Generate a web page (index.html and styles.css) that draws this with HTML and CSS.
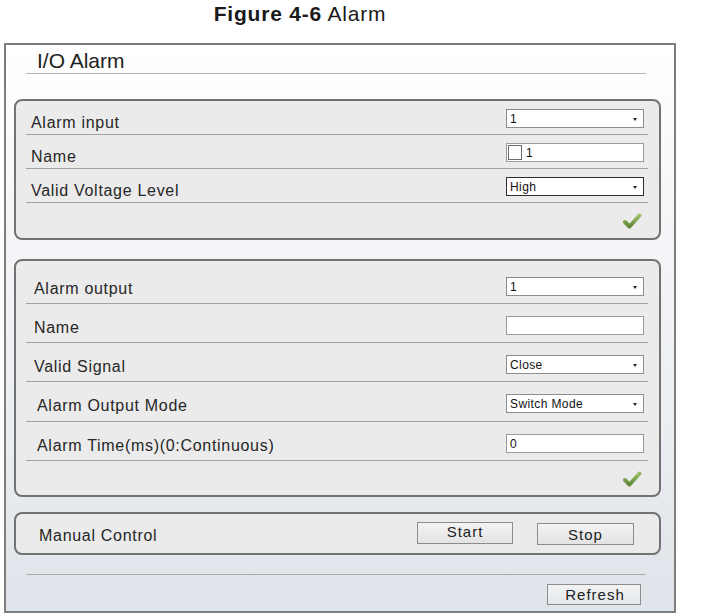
FILE: index.html
```html
<!DOCTYPE html>
<html>
<head>
<meta charset="utf-8">
<link rel="stylesheet" href="styles.css">
</head>
<body>
<div class="fig-title"><b>Figure 4-6</b> Alarm</div>
<div class="window">
  <div class="window-head">I/O Alarm</div>

  <div class="panel panel-in">
    <div class="row">
      <span class="lbl">Alarm input</span>
      <div class="sel"><span>1</span><i class="arrow"></i></div>
    </div>
    <div class="row">
      <span class="lbl">Name</span>
      <div class="inp"><span class="cbox"></span><span>1</span></div>
    </div>
    <div class="row">
      <span class="lbl">Valid Voltage Level</span>
      <div class="sel sel-focus"><span>High</span><i class="arrow"></i></div>
    </div>
    <div class="foot">
      <svg class="check" width="20" height="18" viewBox="0 0 20 18">
        <defs><linearGradient id="g1" x1="0" y1="0" x2="0" y2="1"><stop offset="0" stop-color="#9bbf6a"/><stop offset="1" stop-color="#62893a"/></linearGradient></defs>
        <path d="M3 10 L7.5 14.5 L17.5 3.5" fill="none" stroke="url(#g1)" stroke-width="4" stroke-linecap="round" stroke-linejoin="round"/>
      </svg>
    </div>
  </div>

  <div class="panel panel-out">
    <div class="row row-first row-b">
      <span class="lbl lbl-a">Alarm output</span>
      <div class="sel"><span>1</span><i class="arrow"></i></div>
    </div>
    <div class="row row-b">
      <span class="lbl lbl-a">Name</span>
      <div class="inp"></div>
    </div>
    <div class="row row-b">
      <span class="lbl lbl-a">Valid Signal</span>
      <div class="sel"><span>Close</span><i class="arrow"></i></div>
    </div>
    <div class="row row-b row-wide">
      <span class="lbl lbl-c">Alarm Output Mode</span>
      <div class="sel"><span>Switch Mode</span><i class="arrow"></i></div>
    </div>
    <div class="row row-b">
      <span class="lbl lbl-c">Alarm Time(ms)(0:Continuous)</span>
      <div class="inp"><span>0</span></div>
    </div>
    <div class="foot">
      <svg class="check" width="20" height="18" viewBox="0 0 20 18">
        <defs><linearGradient id="g2" x1="0" y1="0" x2="0" y2="1"><stop offset="0" stop-color="#9bbf6a"/><stop offset="1" stop-color="#62893a"/></linearGradient></defs>
        <path d="M3 10 L7.5 14.5 L17.5 3.5" fill="none" stroke="url(#g2)" stroke-width="4" stroke-linecap="round" stroke-linejoin="round"/>
      </svg>
    </div>
  </div>

  <div class="panel panel-manual">
    <span class="lbl manual-lbl">Manual Control</span>
    <div class="btns">
      <button class="btn btn-start">Start</button>
      <button class="btn btn-stop">Stop</button>
    </div>
  </div>

  <div class="sep"></div>
  <div class="refresh-row">
    <button class="btn btn-refresh">Refresh</button>
  </div>
</div>
</body>
</html>
```

FILE: styles.css
```css
* { box-sizing: border-box; }
body {
  margin: 0;
  font-family: "Liberation Sans", Arial, sans-serif;
  color: #222;
  background: #fff;
}
.fig-title {
  width: 600px;
  height: 43px;
  line-height: 28px;
  text-align: center;
  font-size: 21px;
  letter-spacing: 0.8px;
  color: #1a1a1a;
}
.fig-title b { font-weight: bold; }

.window {
  margin-left: 4px;
  width: 672px;
  height: 570px;
  border: 2px solid #7d7d7d;
  background: linear-gradient(to bottom, #ffffff 0%, #f5f6f8 30%, #eaedf1 70%, #dfe4ea 100%);
  display: flex;
  flex-direction: column;
}
.window-head {
  margin-left: 20px;
  width: 620px;
  height: 29px;
  padding-top: 4px;
  padding-left: 11px;
  line-height: 24px;
  font-size: 21px;
  color: #1e1e1e;
  border-bottom: 1px solid #b4b4b4;
}

.panel {
  margin-left: 8px;
  width: 647px;
  border: 2px solid #727272;
  border-radius: 8px;
  background: #ebebeb;
}
.panel-in { margin-top: 25px; height: 141px; }
.panel-out { margin-top: 19px; height: 238px; }

.row {
  margin: 0 11px 0 10px;
  height: 34px;
  display: flex;
  justify-content: space-between;
  align-items: flex-end;
  padding: 0 4px 6px 5px;
  border-bottom: 1px solid #a3a3a3;
}
.row-b { height: 39px; padding-bottom: 7px; }
.row-first { height: 43px; }
.row-wide { height: 40px; padding-bottom: 8px; }

.lbl {
  font-size: 16px;
  letter-spacing: 0.7px;
  line-height: 18px;
  color: #262626;
  margin-bottom: -4px;
}
.lbl-a { padding-left: 3px; }
.lbl-c { padding-left: 6px; }
.row-b .lbl { margin-bottom: -2px; }

.sel, .inp {
  width: 138px;
  height: 19px;
  background: #fff;
  border: 1px solid #8e8e8e;
  font-size: 12px;
  letter-spacing: 0.4px;
  color: #111;
  display: flex;
  align-items: center;
  padding: 0 6px 0 3px;
}
.sel { justify-content: space-between; }
.sel-focus { border-color: #2e2e2e; }
.arrow {
  width: 0;
  height: 0;
  border-left: 2.5px solid transparent;
  border-right: 2.5px solid transparent;
  border-top: 3px solid #222;
  margin-top: 1px;
}
.inp { padding-left: 1px; border-color: #9a9a9a; }
.inp span:only-child { padding-left: 2px; }
.cbox {
  width: 14px;
  height: 15px;
  border: 1px solid #6f6f6f;
  background: #fff;
  margin-right: 4px;
}

.foot {
  height: 35px;
  display: flex;
  justify-content: flex-end;
  align-items: center;
  padding-right: 17px;
}

.panel-manual {
  margin-top: 15px;
  height: 43px;
  display: flex;
  align-items: center;
  justify-content: space-between;
  padding-left: 23px;
  padding-right: 25px;
}
.manual-lbl { padding-top: 5px; margin-bottom: 0; }
.btns { display: flex; gap: 24px; align-items: center; }

.btn {
  font-family: "Liberation Sans", Arial, sans-serif;
  font-size: 15px;
  letter-spacing: 1px;
  color: #222;
  background: linear-gradient(to bottom, #f3f3f3, #e3e3e3);
  border: 1px solid #8c8c8c;
  border-radius: 0;
  padding: 0 0 2px 0;
  line-height: 18px;
  margin: 0;
}
.btn-start { width: 96px; height: 22px; margin-top: -2px; }
.btn-stop { width: 97px; height: 22px; padding: 2px 0 0 0; }

.sep {
  margin-top: 19px;
  margin-left: 20px;
  width: 620px;
  border-top: 1px solid #a9a9a9;
}
.refresh-row {
  margin-top: 9px;
  display: flex;
  justify-content: flex-end;
  padding-right: 33px;
}
.btn-refresh { width: 94px; height: 21px; padding: 1px 0 0 2px; background: linear-gradient(to bottom, #f1f3f5, #e4e7ea); }
```
